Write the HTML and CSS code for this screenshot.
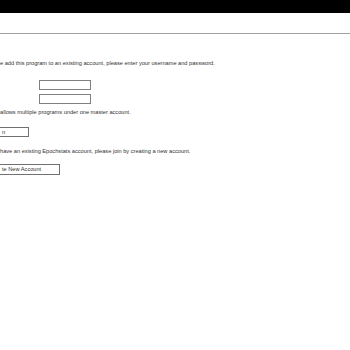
FILE: index.html
```html
<!DOCTYPE html>
<html>
<head>
<meta charset="utf-8">
<link rel="stylesheet" href="styles.css">
</head>
<body>
<div class="topbar"></div>
<div class="header"></div>
<div class="content">
  <p class="line l1">e add this program to an existing account, please enter your username and password.</p>
  <div class="field"><input class="inp" type="text"></div>
  <div class="field f2"><input class="inp" type="password"></div>
  <p class="line l2">allows multiple programs under one master account.</p>
  <div class="btnrow"><span class="btn b1">n</span></div>
  <p class="line l3">have an existing Epochstats account, please join by creating a new account.</p>
  <div class="btnrow r2"><span class="btn b2">te New Account</span></div>
</div>
</body>
</html>
```
FILE: styles.css
```css
html, body {
  margin: 0;
  padding: 0;
  background: #fff;
  overflow: hidden;
}
body {
  width: 350px;
  height: 350px;
  font-family: "Liberation Sans", Arial, sans-serif;
  color: #333;
}
.topbar {
  height: 13px;
  background: #000;
}
.header {
  height: 20px;
  border-bottom: 1px solid #a0a0a0;
}
.content {
  font-size: 5.65px;
  line-height: 7px;
}
.line {
  margin: 0;
  white-space: nowrap;
}
.l1 { margin-top: 26px; }
.field {
  margin-top: 13px;
  padding-left: 39px;
  height: 10px;
}
.f2 { margin-top: 4px; }
.inp {
  display: block;
  box-sizing: border-box;
  width: 52px;
  height: 10px;
  margin: 0;
  padding: 0;
  border: 1px solid #808080;
  background: #fff;
}
.l2 { margin-top: 5px; }
.btnrow {
  margin-top: 11px;
  height: 10px;
}
.btn {
  display: inline-block;
  box-sizing: border-box;
  height: 10px;
  line-height: 8px;
  border: 1px solid #707070;
  margin-left: -1px;
  padding-left: 2px;
  background: #fff;
  color: #333;
}
.b1 { width: 30px; }
.b2 { width: 61px; }
.l3 { margin-top: 11px; }
.r2 { margin-top: 9px; height: 11px; }
.b2 { height: 11px; line-height: 9px; }
```
